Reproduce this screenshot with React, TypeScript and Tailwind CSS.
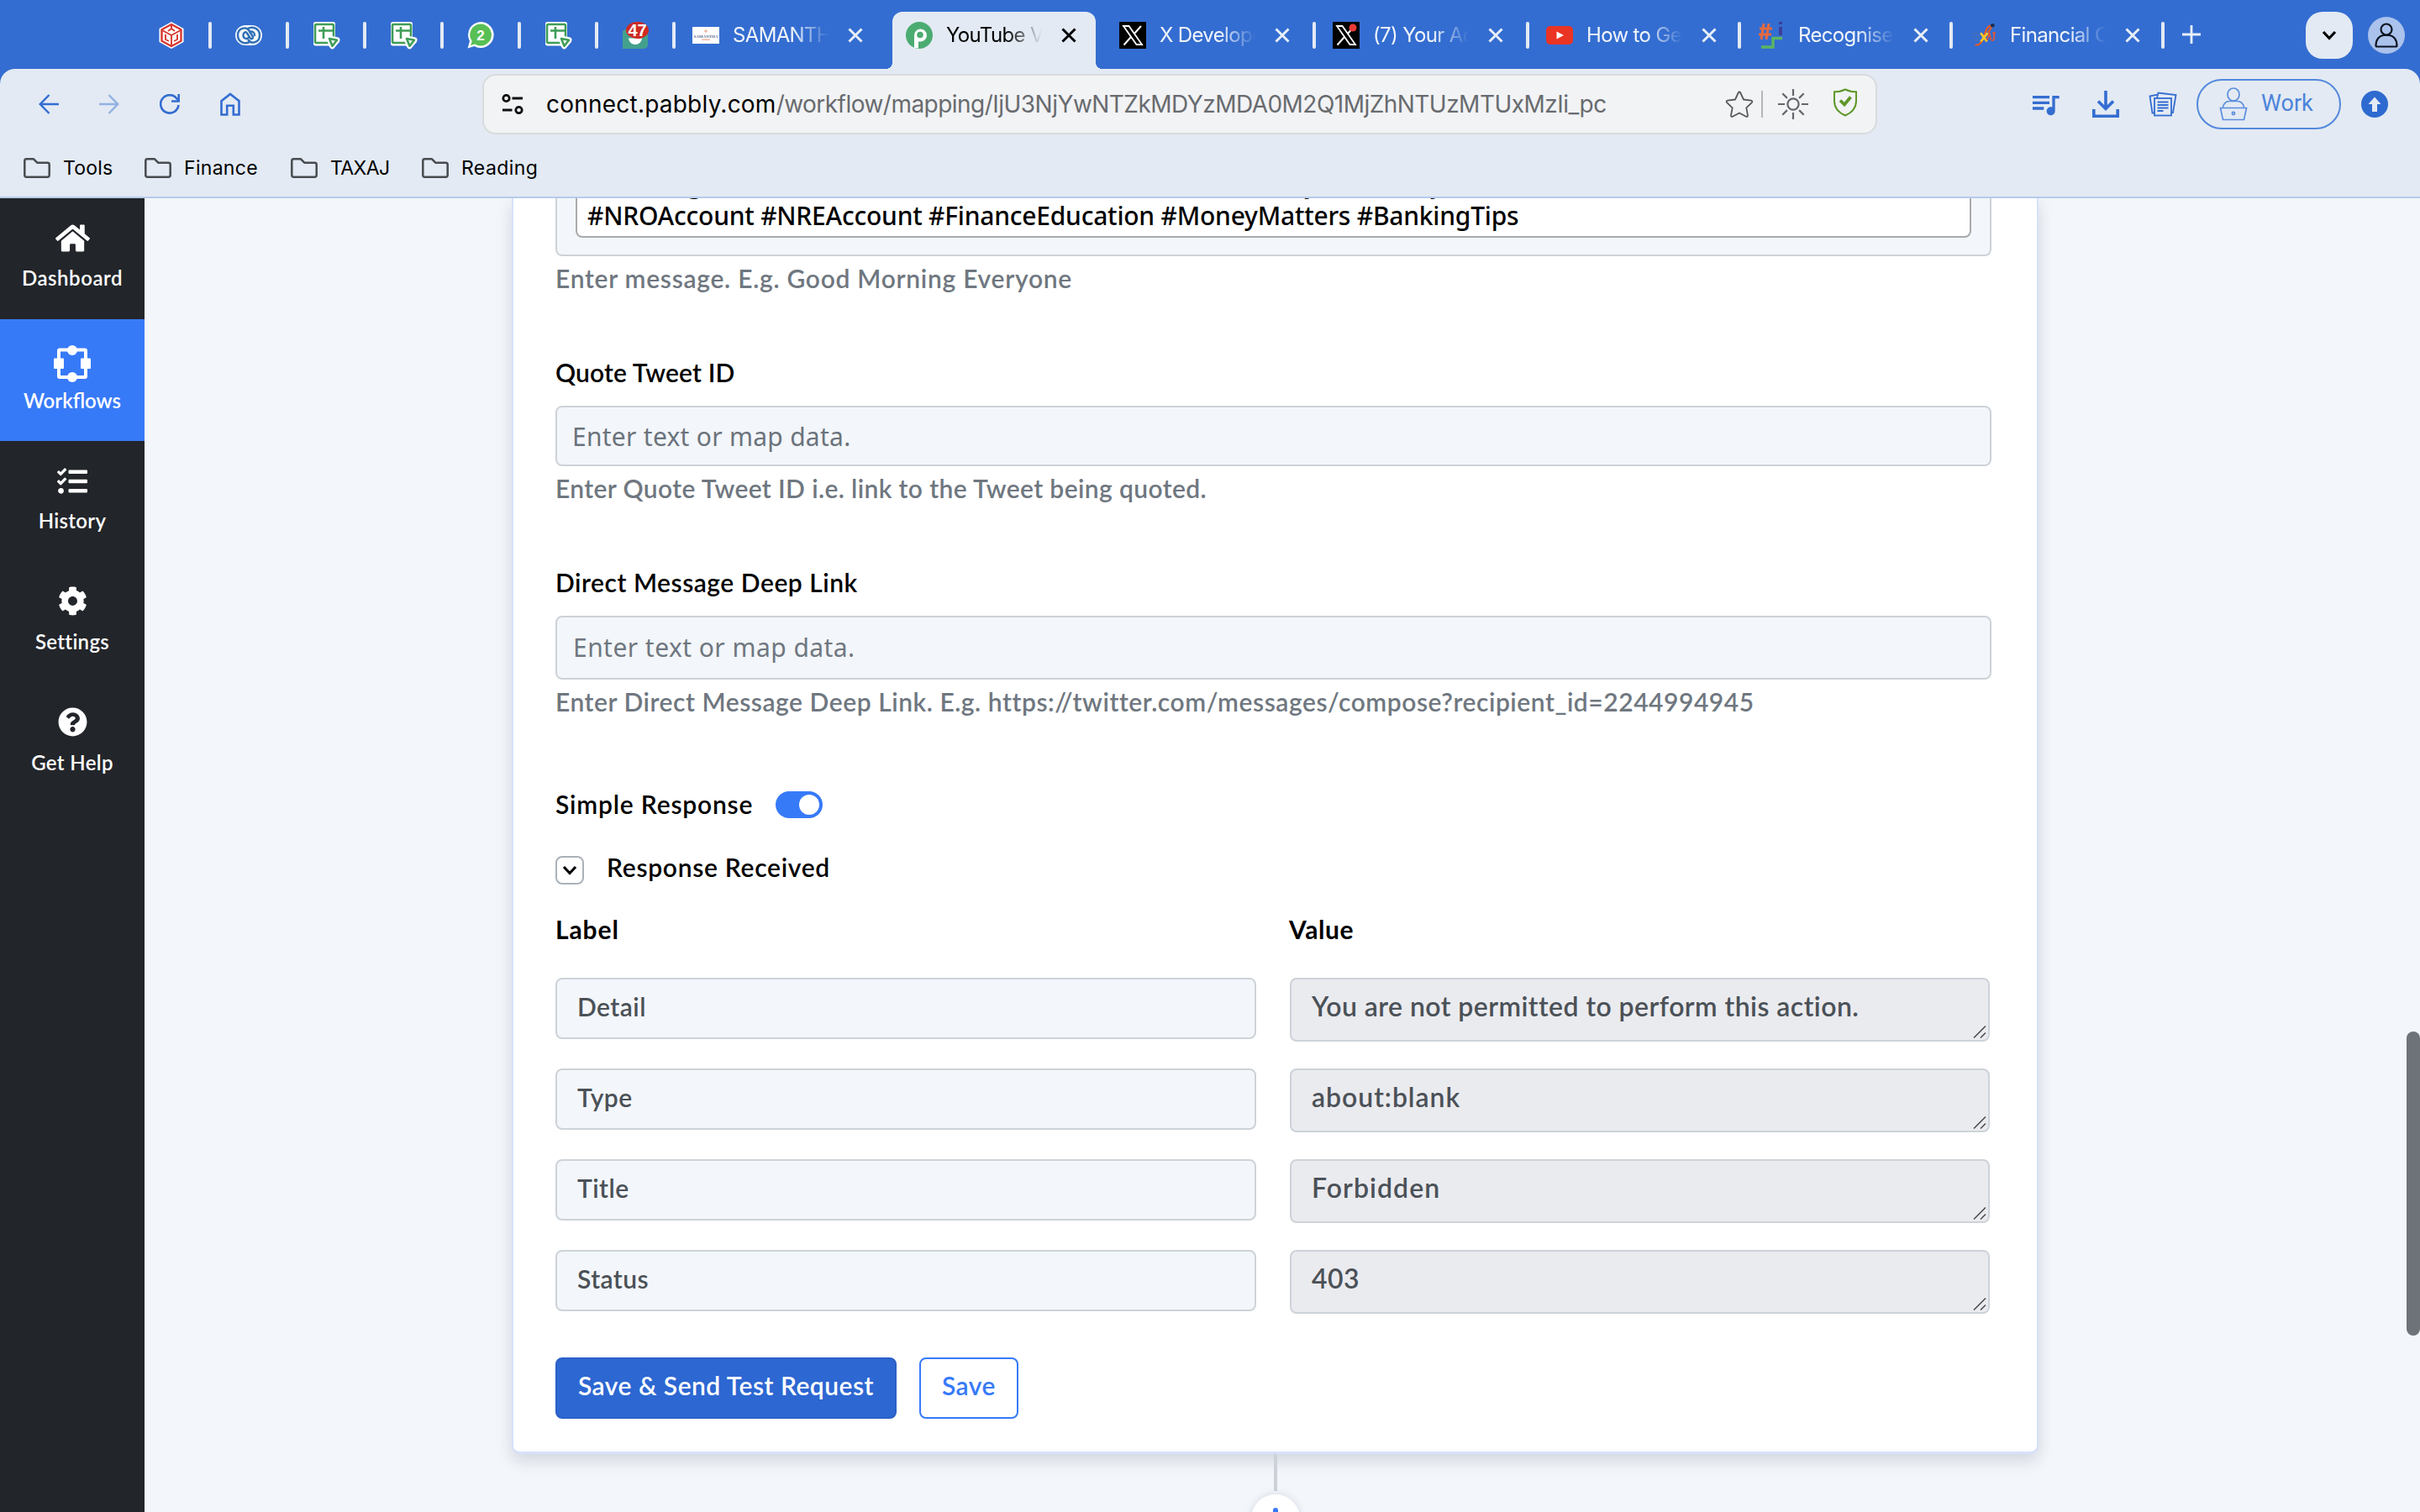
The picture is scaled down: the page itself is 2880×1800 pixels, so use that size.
import type { ReactNode } from "react";
import { FaCog, FaHome, FaQuestionCircle, FaTasks } from "react-icons/fa";
import { MdQueueMusic } from "react-icons/md";

/* ---------- favicons ---------- */

function CubeIcon() {
  return (
    <svg width="32" height="34" viewBox="0 0 32 34" fill="none">
      <path d="M16 1 30.5 9v16L16 33 1.5 25V9z" fill="#fff" />
      <path d="M16 4 27.500 10.300v13.400L16 30 4.500 23.700V10.300z" stroke="#d8382f" strokeWidth="2.400" strokeLinejoin="round" />
      <path d="M5 11l11 6 11-6M16 17v12M16 5v5M12 12l4-3 4 3M9 16v6l4 2M23 16v6l-4 2" stroke="#d8382f" strokeWidth="1.900" />
    </svg>
  );
}

function LoopIcon() {
  return (
    <svg width="34" height="26" viewBox="0 0 34 26" fill="none">
      <rect x="1" y="1" width="32" height="24" rx="12" fill="#f4f8fd" />
      <g stroke="#2f6fb4" strokeWidth="2.400" strokeLinecap="round">
        <path d="M18 21c-5 3-14 .5-14-8C4 4 14 2 17.500 7.500l4 6.500c1.500 2.500-1 4.500-2.700 2.500L15 10.500c-1.500-2.200-4.500-1-4.500 2.500 0 4 4 5 6 3" />
        <path d="M16 5c5-3 14-.5 14 8 0 9-10 11-13.500 5.500" />
        <path d="M18.500 9.500c2-2 5.500-.5 5.500 3.500" />
      </g>
    </svg>
  );
}

function SheetIcon() {
  return (
    <svg width="34" height="34" viewBox="0 0 34 34" fill="none" strokeLinejoin="round">
      <path d="M4.500 3.500h21v18l5 2.500-6.500 6-3-3H4.500z" fill="#fff" stroke="#fff" strokeWidth="5" />
      <rect x="4" y="4" width="22" height="22" rx="1.500" fill="#fff" stroke="#3f9d57" strokeWidth="2.600" />
      <path d="M8 11.500h18M14 7v14" stroke="#3f9d57" strokeWidth="2.600" />
      <path d="m21 21 9 1.700-5.500 7z" fill="#fff" stroke="#fff" strokeWidth="7" />
      <path d="m21 21 9 1.700-5.500 7z" fill="#fff" stroke="#3f9d57" strokeWidth="2.600" />
    </svg>
  );
}

function ChatBadgeIcon() {
  return (
    <svg width="32" height="32" viewBox="0 0 32 32">
      <path d="M16 0a15.500 15.500 0 1 1-7.500 29L.5 31.500 3 23A15.500 15.500 0 0 1 16 0z" fill="#fff" />
      <path d="M16 2.500a13 13 0 1 1-7 24L4 28l1.700-5A13 13 0 0 1 16 2.500z" fill="#58bf55" />
      <text x="16" y="21.500" textAnchor="middle" fontSize="17" fontWeight="700" fill="#fff" fontFamily="Liberation Sans">2</text>
    </svg>
  );
}

function MailBadgeIcon() {
  return (
    <svg width="34" height="34" viewBox="0 0 34 34">
      <path d="M2 12 8 8h21l3 6v14a5 5 0 0 1-5 5H2z" fill="#43a08c" />
      <path d="M9 20.500h16a8 7.500 0 0 1-16 0z" fill="#fff" />
      <ellipse cx="19.500" cy="11" rx="13.500" ry="10" fill="#cf2a22" />
      <text x="19.500" y="18" textAnchor="middle" fontSize="20" fontWeight="700" fill="#fff" fontFamily="Liberation Sans">47</text>
    </svg>
  );
}

function SamanthaIcon() {
  return (
    <svg width="32" height="20" viewBox="0 0 32 20">
      <rect width="32" height="20" fill="#fff" />
      <circle cx="16" cy="5" r="1.800" fill="#f2b6a4" />
      <text x="16" y="12.500" textAnchor="middle" fontSize="5" fontWeight="700" fill="#5b6a8c" fontFamily="Liberation Serif">SAMANTHA</text>
      <rect x="11" y="14.500" width="10" height="1.500" fill="#f2b6a4" />
    </svg>
  );
}

function PabblyIcon() {
  return (
    <svg width="32" height="32" viewBox="0 0 32 32">
      <circle cx="16" cy="16" r="16" fill="#4bac72" />
      <path d="M10 31V16a7.500 7.500 0 1 1 7.500 7.500H15v8z" fill="#fff" />
      <circle cx="17" cy="15.500" r="3.800" fill="#4bac72" />
    </svg>
  );
}

function XIcon({ dot = false }: { dot?: boolean }) {
  return (
    <svg width="32" height="32" viewBox="0 0 32 32" fill="none">
      <rect width="32" height="32" fill="#000" />
      <path d="M5 5h6.500L27 27h-6.500z" stroke="#fff" strokeWidth="1.800" />
      <path d="M26 5 17.500 14.500M14 18l-8.500 9.500" stroke="#fff" strokeWidth="2" />
      {dot && <circle cx="24" cy="7" r="4.500" fill="#ea3b35" />}
    </svg>
  );
}

function YoutubeIcon() {
  return (
    <svg width="32" height="32" viewBox="0 0 32 32">
      <rect y="5" width="32" height="22" rx="5" fill="#ea3424" />
      <path d="m12.500 11.500 8.500 4.500-8.500 4.500z" fill="#fff" />
    </svg>
  );
}

function HashIcon() {
  return (
    <svg width="32" height="32" viewBox="0 0 32 32" fill="none">
      <path d="m7 2-3 19M13 2l-3 19M2 8h15M1 15h15" stroke="#e26a42" strokeWidth="3" />
      <path d="M27 0v3M27 6v10" stroke="#3b3f9c" strokeWidth="4" />
      <path d="M4 30h14V19.500h11" stroke="#5bb562" strokeWidth="3.500" />
    </svg>
  );
}

function TaxajIcon() {
  return (
    <svg width="34" height="32" viewBox="0 0 34 32" fill="none">
      <path d="M2 14h10M3 18h10M4 22h7" stroke="#4a6fb5" strokeWidth="1.500" />
      <path d="M7 28c8 2 10-8 13-16s6-9 7-7-2 5-4 7" stroke="#ea5a1f" strokeWidth="2.200" />
      <path d="m14 13 8 11M23 13l-9 11" stroke="#ffc928" strokeWidth="2.800" />
      <path d="m22 22 3-9 2 9M33 13h-4m2 0v7c0 2-2 3-3 2" stroke="#e4562c" strokeWidth="1.800" />
      <circle cx="29" cy="3.500" r="2.500" fill="#1d2c4d" />
    </svg>
  );
}

/* ---------- browser chrome icons ---------- */

function CloseIcon() {
  return (
    <svg width="20" height="20" viewBox="0 0 20 20" fill="none" stroke="currentColor" strokeWidth="3">
      <path d="m2.500 2.500 15 15M17.500 2.500l-15 15" />
    </svg>
  );
}

function BackIcon() {
  return (
    <svg width="24" height="24" viewBox="0 0 24 24" fill="none" stroke="currentColor" strokeWidth="2.500">
      <path d="M24 12H2M12.500 1 1.800 12l10.700 11" />
    </svg>
  );
}

function ReloadIcon() {
  return (
    <svg width="24" height="24" viewBox="0 0 24 24" fill="none" stroke="currentColor" strokeWidth="2.600">
      <path d="M22.500 13A10.700 10.700 0 1 1 20.500 5.500L23 8" />
      <path d="M22.700 0v8.500H14" />
    </svg>
  );
}

function ToolbarHomeIcon() {
  return (
    <svg width="24" height="28" viewBox="0 0 24 28" fill="none" stroke="currentColor" strokeWidth="2.600">
      <path d="M1.500 26.500V10.200L12 2l10.500 8.200v16.300h-6.700V15.800H8.200v10.700z" />
    </svg>
  );
}

function TuneIcon() {
  return (
    <svg width="26" height="24" viewBox="0 0 26 24" fill="none" stroke="#111" strokeWidth="2.800">
      <circle cx="5.500" cy="5" r="3.700" />
      <path d="M12.500 5H25M1 19h11.500" />
      <circle cx="20.500" cy="19" r="3.700" />
    </svg>
  );
}

function StarIcon() {
  return (
    <svg width="34" height="34" viewBox="0 0 34 34" fill="none" stroke="#55585c" strokeWidth="1.800" strokeLinejoin="round">
      <path d="M17 2.500c.6 0 1 .4 1.300 1l3.700 8 9 1.200c1.400.2 1.700 1.500.8 2.400l-6.500 6.200 1.700 9c.2 1.300-1 2-2 1.500L17 27.500l-8 4.300c-1 .5-2.200-.2-2-1.500l1.700-9-6.500-6.200c-.9-.9-.6-2.200.8-2.400l9-1.200 3.700-8c.3-.6.7-1 1.300-1z" />
    </svg>
  );
}

function SunIcon() {
  return (
    <svg width="36" height="36" viewBox="0 0 36 36" fill="none" stroke="#63676b" strokeWidth="2.200">
      <circle cx="18" cy="18" r="6.600" />
      <path d="M18 0v8M18 28v8M0 18h8M28 18h8M5.300 5.300l5.600 5.600M25.100 25.100l5.600 5.600M5.300 30.700l5.600-5.600M25.100 10.900l5.600-5.600" />
    </svg>
  );
}

function ShieldIcon() {
  return (
    <svg width="30" height="34" viewBox="0 0 30 34" fill="none" stroke="#5f982a">
      <path d="M15 1.500c4 2 8 2.800 13 2.800V15c0 9-6 14.500-13 17.500C8 29.500 2 24 2 15V4.300c5 0 9-.8 13-2.800z" strokeWidth="2" />
      <path d="m9 14.500 5 5 7.500-9" strokeWidth="3.800" />
    </svg>
  );
}

function DownloadIcon() {
  return (
    <svg width="32" height="32" viewBox="0 0 32 32" fill="none" stroke="currentColor" strokeWidth="3.600">
      <path d="M16 0v22M7 12.500l9 9 9-9M1.800 22v8.200h28.400V22" />
    </svg>
  );
}

function PapersIcon() {
  return (
    <svg width="34" height="30" viewBox="0 0 34 30" fill="none" stroke="currentColor" strokeWidth="1.800">
      <rect x="7" y="8" width="20" height="20.500" />
      <path d="M7 25.500H4.500L1.500 5.500l9-1.800M10 7.500l1.500-6 21 2.500-3.500 21h-2" />
      <path d="M10.500 12.500h13M10.500 16h13M10.500 19.500h13M10.500 23h7" />
    </svg>
  );
}

function LaptopPersonIcon() {
  return (
    <svg width="34" height="40" viewBox="0 0 34 40" fill="none" stroke="#5b8ddd" strokeWidth="1.700">
      <ellipse cx="17" cy="8.500" rx="7" ry="7.500" />
      <path d="M4.500 24.500c0-5 4-8 7.500-8h10c3.500 0 7.500 3 7.500 8" />
      <path d="M1.500 24.500h31l-3 14h-25z" />
      <circle cx="17" cy="31" r="1.600" />
    </svg>
  );
}

function PersonIcon() {
  return (
    <svg width="44" height="44" viewBox="0 0 44 44" fill="none" stroke="#0c1320" strokeWidth="2.200">
      <circle cx="22" cy="15" r="6.500" />
      <path d="M9.500 34c0-7 4-11.500 9-12h7c5 .500 9 5 9 12 0 1-.6 1.500-1.500 1.500H11c-.9 0-1.500-.5-1.500-1.500z" />
    </svg>
  );
}

function FolderIcon() {
  return (
    <svg width="32" height="24" viewBox="0 0 32 24" fill="none" stroke="#484b4f" strokeWidth="2.500" strokeLinejoin="round">
      <path d="M1.300 20V3.500c0-1.300.9-2.200 2.200-2.200H12l4.500 4.500h12c1.300 0 2.200.9 2.200 2.200v12.500c0 1.300-.9 2.200-2.200 2.200h-25c-1.300 0-2.200-.9-2.200-2.200z" />
    </svg>
  );
}

function WorkflowsIcon() {
  return (
    <svg width="44" height="44" viewBox="0 0 44 44" fill="#fff">
      <rect x="6" y="5.500" width="32" height="32.500" rx="1" fill="none" stroke="#fff" strokeWidth="4" />
      <circle cx="22" cy="6" r="6" />
      <circle cx="22" cy="38" r="6" />
      <rect x="0" y="15.500" width="12" height="12.500" rx="1" />
      <rect x="32" y="15.500" width="12" height="12.500" rx="1" />
    </svg>
  );
}

function ChevronIcon({ className }: { className: string }) {
  return (
    <svg className={className} viewBox="0 0 18 12" fill="none" stroke="currentColor" strokeWidth="3.200">
      <path d="m2 2 7 7.500L16 2" />
    </svg>
  );
}

/* ---------- tab strip ---------- */

const pinned: ReactNode[] = [
  <CubeIcon />,
  <LoopIcon />,
  <SheetIcon />,
  <SheetIcon />,
  <ChatBadgeIcon />,
  <SheetIcon />,
  <MailBadgeIcon />,
];

type Tab = { icon: ReactNode; title: string; width: string; active?: boolean; noDivider?: boolean };

const tabs: Tab[] = [
  { icon: <SamanthaIcon />, title: "SAMANTHA", width: "w-[254px]" },
  { icon: <PabblyIcon />, title: "YouTube Vid", width: "w-[254px]", active: true },
  { icon: <XIcon />, title: "X Develope", width: "w-[254px]", noDivider: true },
  { icon: <XIcon dot />, title: "(7) Your Acc", width: "w-[254px]" },
  { icon: <YoutubeIcon />, title: "How to Get", width: "w-[252px]" },
  { icon: <HashIcon />, title: "Recognised", width: "w-[252px]" },
  { icon: <TaxajIcon />, title: "Financial C", width: "w-[252px]" },
];

function Divider() {
  return <span className="h-8 w-1 shrink-0 rounded-full bg-[#e3eaf3]" />;
}

function TabItem({ icon, title, width, active, noDivider }: Tab) {
  return (
    <div className={"relative flex h-full shrink-0 items-center " + width}>
      {active && (
        <>
          <div className="absolute top-[12px] right-[4px] bottom-0 left-[8px] rounded-t-xl bg-[#e3eaf3]" />
          <div className="absolute bottom-0 left-0 size-2 bg-[radial-gradient(circle_at_0_0,transparent_8px,#e3eaf3_8px)]" />
          <div className="absolute -right-[4px] bottom-0 size-2 bg-[radial-gradient(circle_at_100%_0,transparent_8px,#e3eaf3_8px)]" />
        </>
      )}
      {active || noDivider ? <span className="w-1" /> : <Divider />}
      <div className="relative ml-[20px] flex w-8 justify-center">{icon}</div>
      <div
        className={
          "relative ml-4 w-[114px] overflow-hidden whitespace-nowrap text-[24px] leading-8 tracking-[-0.650px] [mask-image:linear-gradient(to_right,black_62%,transparent)] " +
          (active ? "text-black" : "text-[#f1f5fb]")
        }
      >
        {title}
      </div>
      <div className={"relative ml-[22px] " + (active ? "text-black" : "text-[#e8eff9]")}>
        <CloseIcon />
      </div>
    </div>
  );
}

function TabStrip() {
  return (
    <div className="flex h-[82px] items-center bg-[#346dd1]">
      <div className="flex pt-[2px] pl-[160px]">
        {pinned.map((icon, i) => (
          <div key={i} className="flex h-[34px] w-[92px] items-center justify-end">
            <span className="flex w-[88px] justify-center">{icon}</span>
            {i < pinned.length - 1 ? <Divider /> : <span className="w-1" />}
          </div>
        ))}
      </div>
      <div className="-ml-1 flex h-full items-center pt-[2px]">
        {tabs.map((tab) => (
          <TabItem key={tab.title} {...tab} />
        ))}
        <Divider />
        <svg className="-mt-[3px] ml-[21px]" width="22" height="22" viewBox="0 0 22 22" stroke="#e8eff9" strokeWidth="2.800">
          <path d="M11 0v22M0 11h22" />
        </svg>
      </div>
      <div className="mr-[18px] ml-auto flex items-center gap-[18px] pt-[2px]">
        <div className="flex h-14 w-14 items-center justify-center rounded-[20px] bg-[#e3eaf3] text-black">
          <ChevronIcon className="h-3 w-[18px]" />
        </div>
        <div className="size-11 rounded-full bg-[#aac2ec]">
          <PersonIcon />
        </div>
      </div>
    </div>
  );
}

/* ---------- toolbar and bookmarks ---------- */

function Toolbar() {
  return (
    <div className="flex h-[84px] items-center text-[#346dd1]">
      <div className="flex w-[574px] items-center gap-12 pl-[46px]">
        <BackIcon />
        <span className="rotate-180 opacity-45">
          <BackIcon />
        </span>
        <ReloadIcon />
        <ToolbarHomeIcon />
      </div>
      <div className="flex h-[72px] w-[1660px] items-center rounded-2xl border-2 border-[#d9dbdd] bg-[#f2f3f5] pl-[21px]">
        <TuneIcon />
        <div className="ml-[27px] w-[1400px] text-[28px] leading-9 whitespace-nowrap text-[#686b6f]">
          <span className="tracking-[0.220px] text-black">connect.pabbly.com</span>
          <span className="tracking-[-0.530px]">/workflow/mapping/IjU3NjYwNTZkMDYzMDA0M2Q1MjZhNTUzMTUxMzIi_pc</span>
        </div>
        <span className="ml-[3px]">
          <StarIcon />
        </span>
        <span className="ml-[9px] h-8 w-[2px] bg-[#b4b7ba]" />
        <span className="ml-[18px]">
          <SunIcon />
        </span>
        <span className="-mt-1 ml-[29px]">
          <ShieldIcon />
        </span>
      </div>
      <div className="flex flex-1 items-center pl-[180px]">
        <MdQueueMusic className="size-10" />
        <span className="ml-[36px]">
          <DownloadIcon />
        </span>
        <span className="ml-[35px]">
          <PapersIcon />
        </span>
        <div className="ml-[23px] flex h-[60px] w-[172px] items-center rounded-full border-2 border-[#5388dc] pl-[25px]">
          <LaptopPersonIcon />
          <span className="-mt-[2px] ml-4 font-['Roboto'] text-[27px] leading-8 text-[#4c84da]">Work</span>
        </div>
        <svg className="ml-6" width="32" height="32" viewBox="0 0 32 32">
          <circle cx="16" cy="16" r="16" fill="#2f6ad0" />
          <path d="M16 7.500 8.500 16H13v9h6v-9h4.500z" fill="#e3eaf3" />
        </svg>
      </div>
    </div>
  );
}

const bookmarks = [
  { name: "Tools", style: "w-[144px] tracking-[0.200px]" },
  { name: "Finance", style: "w-[174px] tracking-[0.300px]" },
  { name: "TAXAJ", style: "w-[156px] tracking-[-0.600px]" },
  { name: "Reading", style: "w-[160px] tracking-[0.400px]" },
];

function Bookmarks() {
  return (
    <div className="flex h-[68px] items-center pl-[28px] text-[23px] leading-8 text-black">
      {bookmarks.map((b) => (
        <div key={b.name} className={"flex items-center gap-[15px] " + b.style}>
          <FolderIcon />
          {b.name}
        </div>
      ))}
    </div>
  );
}

/* ---------- sidebar ---------- */

function SideItem({ icon, label, active, className }: { icon: ReactNode; label: string; active?: boolean; className: string }) {
  return (
    <div className={"flex flex-col items-center " + (active ? "h-[145px] bg-[#377af8]" : "h-[144px]")}>
      <div className="flex h-[78px] items-end justify-center">{icon}</div>
      <div className={"text-[24px] leading-8 font-semibold text-white " + className}>{label}</div>
    </div>
  );
}

function Sidebar() {
  return (
    <nav className="w-[172px] shrink-0 bg-[#22252a] text-white">
      <SideItem label="Dashboard" className="mt-px tracking-[0.550px]" icon={<FaHome className="mb-[10px] size-[41px]" />} />
      <SideItem
        label="Workflows"
        active
        className="mt-[3px] tracking-0"
        icon={<span className="mb-[3px]"><WorkflowsIcon /></span>}
      />
      <SideItem label="History" className="mt-px tracking-[0.300px]" icon={<FaTasks className="mb-[12px] size-[36px]" />} />
      <SideItem label="Settings" className="mt-px tracking-[0.300px]" icon={<FaCog className="mb-[14px] size-[35px]" />} />
      <SideItem label="Get Help" className="mt-px tracking-[0.350px]" icon={<FaQuestionCircle className="mb-[14px] size-[35px]" />} />
    </nav>
  );
}

/* ---------- workflow step card ---------- */

const response = [
  { label: "Detail", value: "You are not permitted to perform this action.", tracking: "tracking-[0.450px]" },
  { label: "Type", value: "about:blank", tracking: "tracking-[0.950px]" },
  { label: "Title", value: "Forbidden", tracking: "tracking-[1.050px]" },
  { label: "Status", value: "403", tracking: "tracking-[0.400px]" },
];

function Hint({ children, className }: { children: ReactNode; className: string }) {
  return <p className={"mt-[7px] h-9 leading-[38px] whitespace-nowrap text-[#6f7780] " + className}>{children}</p>;
}

function ValueBox({ children, tracking }: { children: ReactNode; tracking: string }) {
  return (
    <div
      className={
        "relative flex h-[76px] w-[833px] items-center rounded-lg border-2 border-[#cdd3d8] bg-[#eaebef] pb-[8px] pl-6 text-[32px] text-[#4b5157] " +
        tracking
      }
    >
      {children}
      <svg className="absolute right-[2px] bottom-[2px]" width="16" height="15" viewBox="0 0 16 15" stroke="#4a4a4a" strokeWidth="1.500">
        <path d="M1 14.500 15 .500M9 14.500l6-6" />
      </svg>
    </div>
  );
}

function StepCard() {
  return (
    <section className="ml-[437px] h-[1495px] w-[1817px] rounded-b-[10px] border-2 border-t-0 border-b-[3px] border-[#d6e1fa] bg-white pl-[50px] text-[30px] font-semibold text-black shadow-[0_8px_18px_rgba(40,50,90,0.160)]">
      <div className="h-[69px] w-[1709px] rounded-b-lg border-2 border-t-0 border-[#cdd3d8] bg-[#f3f6fa] px-[22px]">
        <div className="h-[47px] overflow-hidden rounded-b-lg border-2 border-t-0 border-[#aaaaaa] bg-white pl-3 font-['Noto_Sans'] font-medium whitespace-nowrap">
          <div className="-mt-[35px] flex h-9 leading-9">
            <span>#Banking</span>
            <span className="ml-[716px]">y</span>
            <span className="ml-[134px]">y</span>
          </div>
          <div className="h-9 leading-[39px] tracking-[-0.230px]">#NROAccount #NREAccount #FinanceEducation #MoneyMatters #BankingTips</div>
        </div>
      </div>
      <Hint className="tracking-[0.720px]">Enter message. E.g. Good Morning Everyone</Hint>

      <h3 className="mt-[77px] h-9 leading-[37px] tracking-[0.150px]">Quote Tweet ID</h3>
      <div className="mt-[22px] flex h-[72px] w-[1709px] items-center rounded-lg border-2 border-[#cdd3d8] bg-[#f3f6fa] pl-[18px] font-['Noto_Sans'] font-normal tracking-[0.270px] text-[#6b737c]">
        Enter text or map data.
      </div>
      <Hint className="tracking-[0.380px]">Enter Quote Tweet ID i.e. link to the Tweet being quoted.</Hint>

      <h3 className="mt-[77px] h-9 leading-[37px] tracking-[0.520px]">Direct Message Deep Link</h3>
      <div className="mt-[22px] flex h-[76px] w-[1709px] items-center rounded-lg border-2 border-[#cdd3d8] bg-[#f3f6fa] pb-[2px] pl-[19px] font-['Noto_Sans'] font-normal tracking-[0.450px] text-[#6f7780]">
        Enter text or map data.
      </div>
      <Hint className="tracking-[0.540px]">
        Enter Direct Message Deep Link. E.g. https://twitter.com/messages/compose?recipient_id=2244994945
      </Hint>

      <div className="mt-[87px] flex h-9 items-start leading-[37px]">
        <span className="w-[262px] tracking-[0.800px]">Simple Response</span>
        <span className="mt-[3px] flex h-8 w-14 justify-end rounded-full bg-[#377af8] p-1">
          <span className="size-6 rounded-full bg-white" />
        </span>
      </div>

      <div className="mt-[39px] flex h-[39px] items-end">
        <span className="flex size-[34px] items-center justify-center rounded-lg border-2 border-[#abb2b9]">
          <ChevronIcon className="h-3 w-[18px]" />
        </span>
        <span className="ml-[27px] h-[39px] leading-[37px] tracking-[0.700px]">Response Received</span>
      </div>

      <div className="mt-[35px] flex h-9 leading-[37px] font-bold tracking-[0.900px]">
        <span className="w-[873px]">Label</span>
        <span className="tracking-[0.600px]">Value</span>
      </div>

      <div className="mt-10 flex flex-col gap-8">
        {response.map((row) => (
          <div key={row.label} className="flex h-[76px] gap-[40px]">
            <div className="flex h-[73px] w-[834px] items-center rounded-lg border-2 border-[#cdd3d8] bg-[#f3f6fa] pb-[5px] pl-6 tracking-[0.450px] text-[#4b5157]">
              {row.label}
            </div>
            <ValueBox tracking={row.tracking}>{row.value}</ValueBox>
          </div>
        ))}
      </div>

      <div className="mt-[52px] flex gap-[27px]">
        <button className="h-[73px] w-[406px] rounded-lg border-2 border-[#2a60c8] bg-[#2d67d2] pb-[7px] font-semibold tracking-[0.480px] text-white">
          Save &amp; Send Test Request
        </button>
        <button className="h-[73px] w-[118px] rounded-lg border-2 border-[#377af8] bg-white pb-[7px] font-semibold tracking-[0.500px] text-[#377af8]">
          Save
        </button>
      </div>
    </section>
  );
}

export default function App() {
  return (
    <div className="flex h-[1800px] w-[2880px] flex-col overflow-hidden bg-[#346dd1] font-['Inter',sans-serif]">
      <TabStrip />
      <header className="h-[154px] shrink-0 rounded-t-[18px] border-b-2 border-[#b6cbeb] bg-[#e3eaf3]">
        <Toolbar />
        <Bookmarks />
      </header>
      <div className="flex h-[1564px] font-['Lato',sans-serif]">
        <Sidebar />
        <main className="relative flex-1 overflow-hidden bg-[#f3f6fa]">
          <StepCard />
          <div className="ml-[1344px] h-11 w-1 bg-[#cdd2d8]" />
          <div className="mt-1 ml-[1317px] flex size-[58px] items-center justify-center rounded-full bg-white shadow-[0_0_10px_rgba(40,50,90,0.150)]">
            <svg width="26" height="26" viewBox="0 0 26 26" stroke="#377af8" strokeWidth="6" strokeLinecap="round">
              <path d="M13 3v20M3 13h20" />
            </svg>
          </div>
          <div className="absolute top-[992px] right-0 h-[362px] w-4 rounded-full bg-[#6d7378]" />
        </main>
      </div>
    </div>
  );
}
